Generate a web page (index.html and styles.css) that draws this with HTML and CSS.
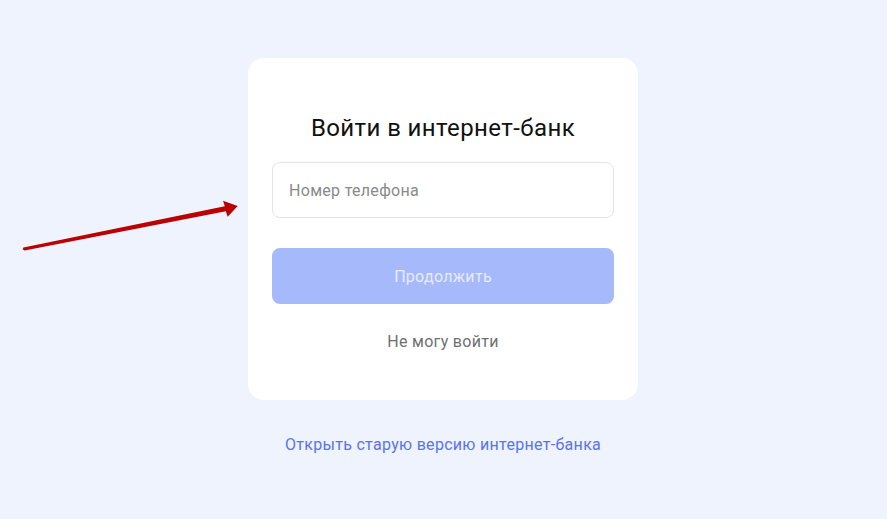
FILE: index.html
```html
<!DOCTYPE html>
<html lang="ru">
<head>
<meta charset="utf-8">
<link rel="stylesheet" href="styles.css">
</head>
<body>
<main class="page">
  <section class="card">
    <h1 class="title">Войти в интернет-банк</h1>
    <div class="field"><span class="placeholder">Номер телефона</span></div>
    <button class="btn" type="button">Продолжить</button>
    <a class="help">Не могу войти</a>
  </section>
  <a class="old-link">Открыть старую версию интернет-банка</a>
</main>
<svg class="arrow" width="240" height="70" viewBox="0 0 240 70">
  <polygon points="24.6,60.6 225.8,21.2 227.7,26.7 237.7,16 223,10.7 224.8,16.3 23.4,57.4 22.6,59.3" fill="#bb0000"/>
</svg>
</body>
</html>
```
FILE: styles.css
```css
* { box-sizing: border-box; }
html, body { margin: 0; padding: 0; }
body {
  background: #eff3fe;
  font-family: Roboto, "Noto Sans", sans-serif;
  width: 887px;
  height: 519px;
  overflow: hidden;
  position: relative;
}
.page {
  display: flex;
  flex-direction: column;
  align-items: center;
  padding-top: 58px;
  padding-right: 1px;
  letter-spacing: 0.3px;
}
.card {
  width: 390px;
  background: #ffffff;
  border-radius: 16px;
  padding: 56px 24px 46px;
  display: flex;
  flex-direction: column;
  align-items: stretch;
}
.title {
  margin: 0;
  font-size: 24px;
  line-height: 28px;
  font-weight: 400;
  letter-spacing: 0.4px;
  color: #111;
  text-align: center;
}
.field {
  margin-top: 20px;
  height: 56px;
  border: 1px solid #e3e3e3;
  border-radius: 8px;
  display: flex;
  align-items: center;
  padding-left: 16px;
}
.placeholder {
  font-size: 16px;
  color: #8a8a8a;
}
.btn {
  margin-top: 30px;
  height: 56px;
  border: none;
  border-radius: 8px;
  background: #a5b9fb;
  color: #e6ecfd;
  font-family: inherit;
  font-size: 16px;
  font-weight: 400;
  letter-spacing: 0.3px;
}
.help {
  margin-top: 26px;
  text-align: center;
  font-size: 16px;
  line-height: 24px;
  color: #707070;
}
.old-link {
  margin-top: 33px;
  font-size: 16px;
  line-height: 24px;
  color: #5a72f2;
}
.arrow {
  position: absolute;
  left: 0;
  top: 190px;
}
```
